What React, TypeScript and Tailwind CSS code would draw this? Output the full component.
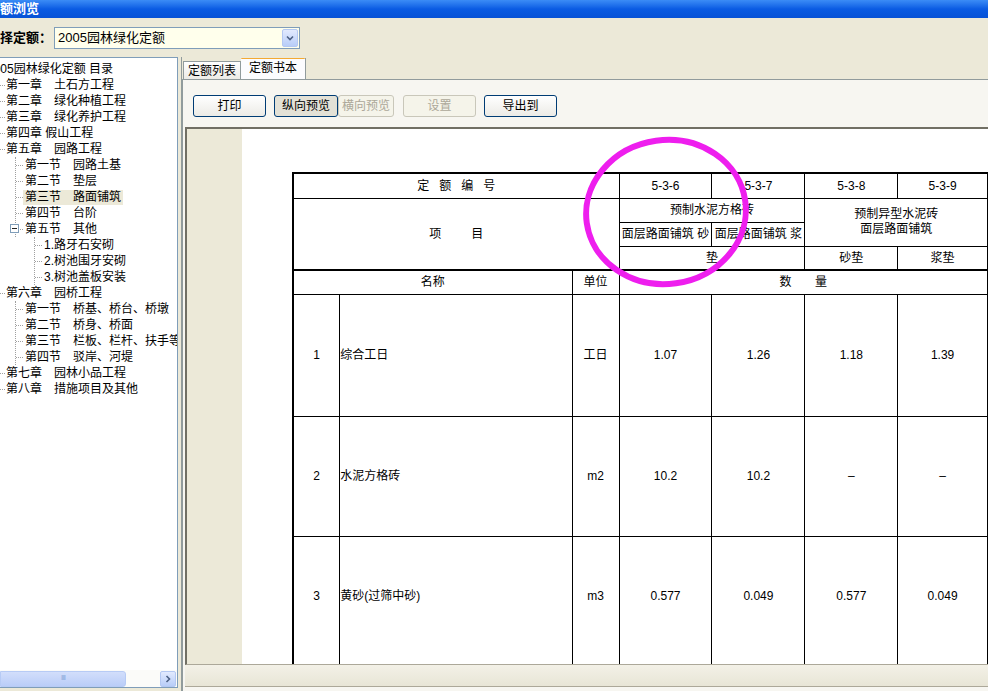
import React from 'react';

const FONT = { fontFamily: '"Liberation Sans", "Noto Sans CJK SC", sans-serif' };

const dot = 'border-dotted border-[#A0A0A0]';

function Chapter({ text }: { text: string }) {
  return (
    <div className="flex h-[16px] items-center whitespace-nowrap">
      <span className={`w-[5px] shrink-0 border-t ${dot}`} />
      <span className="ml-[1px]">{text}</span>
    </div>
  );
}

function Section({ text, selected }: { text: string; selected?: boolean }) {
  return (
    <div className="flex h-[16px] items-center whitespace-nowrap">
      <span className={`w-[7px] shrink-0 border-t ${dot}`} />
      <span className={`shrink-0 px-[2px] leading-[15px] ${selected ? 'bg-[#ECE9D8]' : ''}`}>{text}</span>
    </div>
  );
}

function Tree() {
  return (
    <div className="text-[12px] text-black">
      <div className="flex h-[16px] items-center whitespace-nowrap -ml-[13px]">2005园林绿化定额 目录</div>
      <Chapter text="第一章　土石方工程" />
      <Chapter text="第二章　绿化种植工程" />
      <Chapter text="第三章　绿化养护工程" />
      <Chapter text="第四章 假山工程" />
      <Chapter text="第五章　园路工程" />
      <div className={`ml-[15px] border-l ${dot}`}>
        <Section text="第一节　园路土基" />
        <Section text="第二节　垫层" />
        <Section text="第三节　路面铺筑" selected />
        <Section text="第四节　台阶" />
        <div className="relative flex h-[16px] items-center whitespace-nowrap">
          <span className={`w-[7px] shrink-0 border-t ${dot}`} />
          <span className="px-[2px]">第五节　其他</span>
          <span className="absolute -left-[6px] top-[3px] flex h-[9px] w-[9px] items-center justify-center border border-[#7F9DB9] bg-white">
            <span className="h-px w-[5px] bg-[#222]" />
          </span>
        </div>
      </div>
      <div className={`ml-[34px] border-l ${dot}`}>
        <Section text="1.路牙石安砌" />
        <Section text="2.树池围牙安砌" />
        <Section text="3.树池盖板安装" />
      </div>
      <Chapter text="第六章　园桥工程" />
      <div className={`ml-[15px] border-l ${dot}`}>
        <Section text="第一节　桥基、桥台、桥墩" />
        <Section text="第二节　桥身、桥面" />
        <Section text="第三节　栏板、栏杆、扶手等" />
        <Section text="第四节　驳岸、河堤" />
      </div>
      <Chapter text="第七章　园林小品工程" />
      <Chapter text="第八章　措施项目及其他" />
    </div>
  );
}

function Btn({ label, w, kind }: { label: string; w: string; kind: 'normal' | 'pressed' | 'disabled' }) {
  const look =
    kind === 'normal'
      ? 'border-[#003C74] bg-gradient-to-b from-white to-[#ECEBE6] text-black'
      : kind === 'pressed'
        ? 'border-[#003C74] bg-[#E3E1D6] text-black'
        : 'border-[#C9C7BA] bg-[#F5F4EA] text-[#ACA899]';
  return (
    <div className={`flex h-[22px] items-center justify-center rounded-[3px] border text-[12px] ${w} ${look}`}>
      {label}
    </div>
  );
}

const td = 'border border-black text-center align-middle p-0';
// last visible row runs on past the bottom of the page
const tdOpen = 'border border-b-0 border-black text-center align-middle p-0';
const tdTail = 'border border-t-0 border-black p-0';

function QuotaTable() {
  return (
    <table className="table-fixed border-collapse text-[12px] text-black" style={FONT}>
      <colgroup>
        <col className="w-[47px]" />
        <col className="w-[233px]" />
        <col className="w-[47px]" />
        <col className="w-[93px]" />
        <col className="w-[93px]" />
        <col className="w-[93px]" />
        <col className="w-[90px]" />
      </colgroup>
      <tbody>
        <tr className="h-[25px] border-t-2 border-black">
          <td colSpan={3} className={`${td} border-l-2`}>定&nbsp;&nbsp;&nbsp;额&nbsp;&nbsp;&nbsp;编&nbsp;&nbsp;&nbsp;号</td>
          <td className={td}>5-3-6</td>
          <td className={td}>5-3-7</td>
          <td className={td}>5-3-8</td>
          <td className={td}>5-3-9</td>
        </tr>
        <tr className="h-[24px]">
          <td colSpan={3} rowSpan={3} className={`${td} border-l-2 border-b-2`}>
            项&nbsp;&nbsp;&nbsp;&nbsp;&nbsp;&nbsp;&nbsp;&nbsp;&nbsp;目
          </td>
          <td colSpan={2} className={td}>预制水泥方格砖</td>
          <td colSpan={2} rowSpan={2} className={`${td} leading-[15px]`}>
            预制异型水泥砖
            <br />
            面层路面铺筑
          </td>
        </tr>
        <tr className="h-[24px]">
          <td className={`${td} whitespace-nowrap overflow-hidden`}>面层路面铺筑 砂</td>
          <td className={`${td} whitespace-nowrap overflow-hidden`}>面层路面铺筑 浆</td>
        </tr>
        <tr className="h-[24px] border-b-2 border-black">
          <td colSpan={2} className={`${td} border-b-2`}>垫</td>
          <td className={`${td} border-b-2`}>砂垫</td>
          <td className={`${td} border-b-2`}>浆垫</td>
        </tr>
        <tr className="h-[24px]">
          <td colSpan={2} className={`${td} border-l-2`}>名称</td>
          <td className={td}>单位</td>
          <td colSpan={4} className={td}>数&nbsp;&nbsp;&nbsp;&nbsp;&nbsp;&nbsp;&nbsp;量</td>
        </tr>
        <tr className="h-[122px]">
          <td className={`${td} border-l-2`}>1</td>
          <td className={`${td} text-left`}>综合工日</td>
          <td className={td}>工日</td>
          <td className={td}>1.07</td>
          <td className={td}>1.26</td>
          <td className={td}>1.18</td>
          <td className={td}>1.39</td>
        </tr>
        <tr className="h-[120px]">
          <td className={`${td} border-l-2`}>2</td>
          <td className={`${td} text-left`}>水泥方格砖</td>
          <td className={td}>m2</td>
          <td className={td}>10.2</td>
          <td className={td}>10.2</td>
          <td className={td}>–</td>
          <td className={td}>–</td>
        </tr>
        <tr className="h-[120px]">
          <td className={`${tdOpen} border-l-2`}>3</td>
          <td className={`${tdOpen} text-left`}>黄砂(过筛中砂)</td>
          <td className={tdOpen}>m3</td>
          <td className={tdOpen}>0.577</td>
          <td className={tdOpen}>0.049</td>
          <td className={tdOpen}>0.577</td>
          <td className={tdOpen}>0.049</td>
        </tr>
        <tr className="h-[60px]">
          <td className={`${tdTail} border-l-2`} />
          <td className={tdTail} />
          <td className={tdTail} />
          <td className={tdTail} />
          <td className={tdTail} />
          <td className={tdTail} />
          <td className={tdTail} />
        </tr>
      </tbody>
    </table>
  );
}

export default function App() {
  return (
    <div className="relative flex h-[691px] w-[988px] flex-col overflow-hidden bg-[#ECE9D8]" style={FONT}>
      {/* title bar */}
      <div className="flex h-[18px] items-center overflow-hidden bg-gradient-to-b from-[#3B8CF6] via-[#0A5BE3] to-[#0752D6] text-[13px] font-bold text-white">
        <span className="-ml-[13px] shrink-0">定额浏览</span>
      </div>

      {/* quota selector */}
      <div className="flex h-[39px] items-center overflow-hidden">
        <span className="-ml-[13px] shrink-0 text-[13px] font-bold">选择定额：</span>
        <div className="ml-[2px] flex h-[22px] w-[246px] shrink-0 items-center border border-[#7F9DB9] bg-[#FFFFEC] pl-[3px] text-[13px]">
          <span className="flex-1">2005园林绿化定额</span>
          <span className="mr-px flex h-[18px] w-[16px] items-center justify-center rounded-[2px] border border-[#B4C8F2] bg-gradient-to-b from-[#E2EAFE] to-[#B8CDF8]">
            <svg width="8" height="6" viewBox="0 0 8 6">
              <path d="M1 1.5 L4 4.5 L7 1.5" fill="none" stroke="#4D6185" strokeWidth="1.6" />
            </svg>
          </span>
        </div>
      </div>

      <div className="flex flex-1">
        {/* left tree */}
        <div className="flex w-[178px] flex-col pb-[3px]">
          <div className="flex flex-1 flex-col overflow-hidden border-r border-t border-b border-[#7F9DB9] bg-white">
            <div className="flex-1 overflow-hidden pt-[3px]">
              <Tree />
            </div>
            <div className="flex h-[17px] items-center bg-[#FBFBF9]">
              <div className="flex h-[16px] w-[126px] items-center justify-center rounded-r-[3px] border border-[#B7CBF5] bg-gradient-to-b from-[#D2DEFB] to-[#BACDF8]">
                <span className="text-[7px] tracking-[-1px] text-[#8AA4DC]">IIII</span>
              </div>
              <div className="flex-1" />
              <div className="mr-px flex h-[16px] w-[16px] items-center justify-center rounded-[2px] border border-[#B4C8F2] bg-gradient-to-b from-[#E2EAFE] to-[#B8CDF8]">
                <svg width="6" height="8" viewBox="0 0 6 8">
                  <path d="M1.5 1 L4.5 4 L1.5 7" fill="none" stroke="#4D6185" strokeWidth="1.6" />
                </svg>
              </div>
            </div>
          </div>
        </div>

        <div className="w-[3px]" />

        {/* right panel */}
        <div className="flex flex-1 flex-col border-l border-[#919B9C] pt-px">
          <div className="flex h-[21px] items-end pl-px text-[12px]">
            <div className="flex h-[18px] w-[58px] items-center justify-center border border-b-0 border-[#919B9C] bg-gradient-to-b from-white to-[#ECEBE6]">
              定额列表
            </div>
            <div className="flex h-[21px] w-[65px] flex-col border-r border-[#919B9C] bg-[#FCFCFE]">
              <div className="h-[3px] rounded-t-[2px] bg-gradient-to-b from-[#FFC83C] to-[#E68B2C]" />
              <div className="flex flex-1 items-center justify-center pb-[2px]">定额书本</div>
            </div>
          </div>
          <div className="flex flex-1 flex-col border-l border-t border-[#919B9C] bg-[#F7F6F1]">
            <div className="flex h-[47px] items-start gap-[8px] pl-[10px] pt-[15px]">
              <Btn label="打印" w="w-[73px]" kind="normal" />
              <div className="flex">
                <Btn label="纵向预览" w="w-[64px]" kind="pressed" />
                <Btn label="横向预览" w="w-[56px]" kind="disabled" />
              </div>
              <div className="ml-px">
                <Btn label="设置" w="w-[73px]" kind="disabled" />
              </div>
              <Btn label="导出到" w="w-[73px]" kind="normal" />
            </div>
            <div className="ml-[2px] flex h-[538px] border-l-2 border-t-2 border-b border-l-[#716F64] border-t-[#716F64] border-b-[#ACA899] bg-white">
              <div className="w-[55px] bg-[#ECE9D8]" />
              <div className="flex-1 overflow-hidden pl-[50px] pt-[43px]">
                <QuotaTable />
              </div>
            </div>
            <div className="ml-[2px] h-[22px] border-b border-[#ACA899] bg-gradient-to-b from-[#F3F1E7] to-[#E8E5D6]" />
            <div className="flex-1" />
          </div>
        </div>
      </div>

      {/* annotation ring */}
      <svg className="pointer-events-none absolute left-[578px] top-[132px]" width="180" height="162" viewBox="0 0 180 162">
        <ellipse cx="88" cy="80" rx="80" ry="72" fill="none" stroke="#EE1EEE" strokeWidth="6" transform="rotate(-8 88 80)" />
      </svg>
    </div>
  );
}
